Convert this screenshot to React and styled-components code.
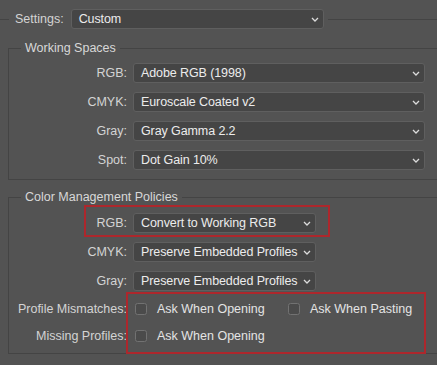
import React from "react";
import styled, { createGlobalStyle } from "styled-components";

const Global = createGlobalStyle`
  html, body { margin: 0; padding: 0; background: #535353; }
  body {
    font-family: "Liberation Sans", Arial, sans-serif;
    font-size: 12.5px;
    overflow: hidden;
  }
`;

const Page = styled.div`
  width: 437px;
  height: 365px;
  overflow: hidden;
  padding-top: 9px;
  box-sizing: border-box;
  background: #535353;
`;

const TopRow = styled.div`
  display: flex;
  align-items: center;
  height: 20px;
`;

const Rule = styled.div`
  height: 1px;
  background: #444444;
  width: ${(p) => (p.$w ? `${p.$w}px` : "auto")};
  flex: ${(p) => (p.$w ? "none" : "1")};
  margin-left: ${(p) => p.$ml || 0}px;
`;

const Label = styled.span`
  color: #d4d4d4;
  white-space: nowrap;
  line-height: 16px;
  margin-left: ${(p) => p.$ml || 0}px;
  justify-self: end;
`;

const SelectBox = styled.div`
  box-sizing: border-box;
  width: ${(p) => p.$w}px;
  height: 20px;
  display: flex;
  align-items: center;
  justify-content: space-between;
  gap: 4px;
  padding: 0 4px 0 7px;
  background: #454545;
  border: 1px solid #5f5f5f;
  border-radius: 3px;
  color: #ececec;
  white-space: nowrap;
  letter-spacing: -0.1px;
  margin-left: ${(p) => p.$ml || 0}px;
`;

const Group = styled.fieldset`
  position: relative;
  margin: ${(p) => p.$mt}px -40px 0 8px;
  padding: ${(p) => p.$pt}px 0 ${(p) => p.$pb}px 0;
  border: 1px solid #444444;
  min-width: 0;
`;

const Legend = styled.legend`
  margin-left: 12px;
  padding: 0 4px;
  color: #d8d8d8;
  line-height: 16px;
`;

const Form = styled.div`
  position: relative;
  display: grid;
  grid-template-columns: 118px auto;
  column-gap: 6px;
  row-gap: 9px;
  align-items: center;
  justify-items: start;
`;

const CheckRow = styled.div`
  display: flex;
  align-items: center;
  height: 18px;
  margin-left: 2px;
`;

const Option = styled.div`
  display: flex;
  align-items: center;
  gap: 10px;
  width: ${(p) => (p.$w ? `${p.$w}px` : "auto")};
  color: #e4e4e4;
  white-space: nowrap;
`;

const Box = styled.span`
  box-sizing: border-box;
  width: 12px;
  height: 12px;
  border: 1px solid #727272;
  border-radius: 2.5px;
  background: #4b4b4b;
`;

const Annotation = styled.div`
  position: absolute;
  box-sizing: border-box;
  border: 2px solid #ad272c;
  pointer-events: none;
`;

const Chevron = () => (
  <svg width="8" height="5" viewBox="0 0 8 5" style={{ flex: "none" }}>
    <polyline points="1,1 4,4 7,1" fill="none" stroke="#dcdcdc" strokeWidth="1.3" />
  </svg>
);

const Select = ({ w, ml, children }) => (
  <SelectBox $w={w} $ml={ml}>
    <span>{children}</span>
    <Chevron />
  </SelectBox>
);

const Check = ({ w, children }) => (
  <Option $w={w}>
    <Box />
    <span>{children}</span>
  </Option>
);

export default function App() {
  return (
    <>
      <Global />
      <Page>
        <TopRow>
          <Rule $w={9} />
          <Label $ml={6}>Settings:</Label>
          <Select w={253} ml={7}>Custom</Select>
          <Rule $ml={4} />
        </TopRow>

        <Group $mt={11} $pt={7} $pb={9}>
          <Legend>Working Spaces</Legend>
          <Form>
            <Label>RGB:</Label>
            <Select w={292}>Adobe RGB (1998)</Select>
            <Label>CMYK:</Label>
            <Select w={292}>Euroscale Coated v2</Select>
            <Label>Gray:</Label>
            <Select w={292}>Gray Gamma 2.2</Select>
            <Label>Spot:</Label>
            <Select w={292}>Dot Gain 10%</Select>
          </Form>
        </Group>

        <Group $mt={9} $pt={8} $pb={8}>
          <Legend>Color Management Policies</Legend>
          <Form>
            <Label>RGB:</Label>
            <Select w={183}>Convert to Working RGB</Select>
            <Label>CMYK:</Label>
            <Select w={183}>Preserve Embedded Profiles</Select>
            <Label>Gray:</Label>
            <Select w={183}>Preserve Embedded Profiles</Select>
            <Label>Profile Mismatches:</Label>
            <CheckRow>
              <Check w={153}>Ask When Opening</Check>
              <Check>Ask When Pasting</Check>
            </CheckRow>
            <Label>Missing Profiles:</Label>
            <CheckRow>
              <Check>Ask When Opening</Check>
            </CheckRow>
            <Annotation style={{ left: 75, top: -8, width: 246, height: 32 }} />
            <Annotation style={{ left: 117, top: 79, width: 300, height: 62 }} />
          </Form>
        </Group>
      </Page>
    </>
  );
}
